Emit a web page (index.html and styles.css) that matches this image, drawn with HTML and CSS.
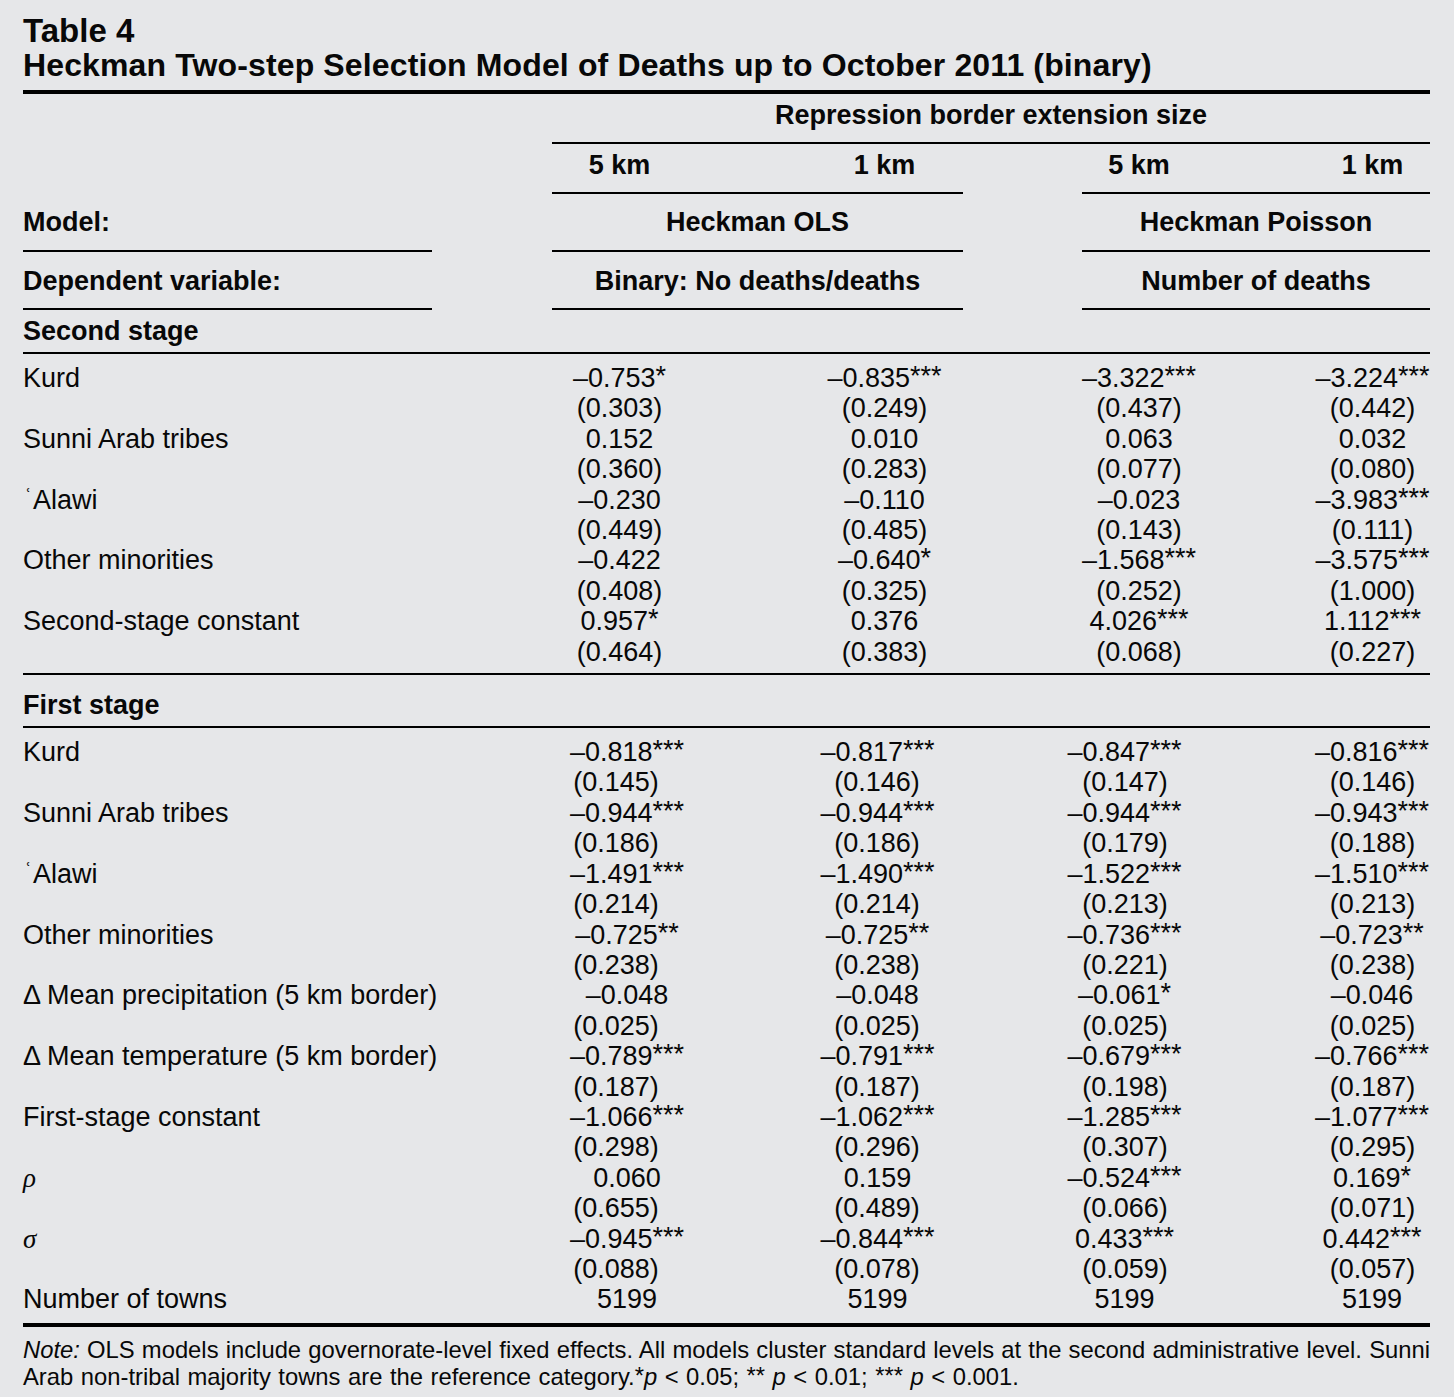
FILE: index.html
```html
<!DOCTYPE html>
<html lang="en">
<head>
<meta charset="utf-8">
<title>Table 4</title>
<link rel="stylesheet" href="styles.css">
</head>
<body>
<div class="page">
  <h1 class="title">
    <span class="t1">Table 4</span>
    <span class="t2">Heckman Two-step Selection Model of Deaths up to October 2011 (binary)</span>
  </h1>
  <table class="tbl">
    <colgroup>
      <col class="c-label"><col class="c-gap1"><col class="c-1"><col class="c-2"><col class="c-gap2a"><col class="c-gap2b"><col class="c-3"><col class="c-4">
    </colgroup>
    <thead>
      <tr class="h-rep"><td></td><td></td><th colspan="6" class="rule">Repression border extension size</th></tr>
      <tr class="h-km"><td></td><td></td><th class="rule k1">5 km</th><th class="rule k2">1 km</th><td colspan="2"></td><th class="rule k3">5 km</th><th class="rule k4">1 km</th></tr>
      <tr class="h-model"><th class="rule lbl">Model:</th><td></td><th colspan="2" class="rule">Heckman OLS</th><td colspan="2"></td><th colspan="2" class="rule">Heckman Poisson</th></tr>
      <tr class="h-dep"><th class="rule lbl">Dependent variable:</th><td></td><th colspan="2" class="rule">Binary: No deaths/deaths</th><td colspan="2"></td><th colspan="2" class="rule">Number of deaths</th></tr>
    </thead>
    <tbody class="stage s2">
      <tr class="sec"><th colspan="8">Second stage</th></tr>
      <tr class="v first"><td class="lbl">Kurd</td><td></td><td>–0.753<span class="st">*</span></td><td>–0.835<span class="st">***</span></td><td></td><td colspan="2">–3.322<span class="st">***</span></td><td>–3.224<span class="st">***</span></td></tr>
      <tr class="se"><td></td><td></td><td>(0.303)</td><td>(0.249)</td><td></td><td colspan="2">(0.437)</td><td>(0.442)</td></tr>
      <tr class="v"><td class="lbl">Sunni Arab tribes</td><td></td><td>0.152</td><td>0.010</td><td></td><td colspan="2">0.063</td><td>0.032</td></tr>
      <tr class="se"><td></td><td></td><td>(0.360)</td><td>(0.283)</td><td></td><td colspan="2">(0.077)</td><td>(0.080)</td></tr>
      <tr class="v"><td class="lbl"><span class="ayn">ʿ</span>Alawi</td><td></td><td>–0.230</td><td>–0.110</td><td></td><td colspan="2">–0.023</td><td>–3.983<span class="st">***</span></td></tr>
      <tr class="se"><td></td><td></td><td>(0.449)</td><td>(0.485)</td><td></td><td colspan="2">(0.143)</td><td>(0.111)</td></tr>
      <tr class="v"><td class="lbl">Other minorities</td><td></td><td>–0.422</td><td>–0.640<span class="st">*</span></td><td></td><td colspan="2">–1.568<span class="st">***</span></td><td>–3.575<span class="st">***</span></td></tr>
      <tr class="se"><td></td><td></td><td>(0.408)</td><td>(0.325)</td><td></td><td colspan="2">(0.252)</td><td>(1.000)</td></tr>
      <tr class="v"><td class="lbl">Second-stage constant</td><td></td><td>0.957<span class="st">*</span></td><td>0.376</td><td></td><td colspan="2">4.026<span class="st">***</span></td><td>1.112<span class="st">***</span></td></tr>
      <tr class="se last"><td></td><td></td><td>(0.464)</td><td>(0.383)</td><td></td><td colspan="2">(0.068)</td><td>(0.227)</td></tr>
    </tbody>
    <tbody class="stage s1">
      <tr class="sec"><th colspan="8">First stage</th></tr>
      <tr class="v first"><td class="lbl">Kurd</td><td></td><td>–0.818<span class="st">***</span></td><td>–0.817<span class="st">***</span></td><td></td><td colspan="2">–0.847<span class="st">***</span></td><td>–0.816<span class="st">***</span></td></tr>
      <tr class="se"><td></td><td></td><td>(0.145)</td><td>(0.146)</td><td></td><td colspan="2">(0.147)</td><td>(0.146)</td></tr>
      <tr class="v"><td class="lbl">Sunni Arab tribes</td><td></td><td>–0.944<span class="st">***</span></td><td>–0.944<span class="st">***</span></td><td></td><td colspan="2">–0.944<span class="st">***</span></td><td>–0.943<span class="st">***</span></td></tr>
      <tr class="se"><td></td><td></td><td>(0.186)</td><td>(0.186)</td><td></td><td colspan="2">(0.179)</td><td>(0.188)</td></tr>
      <tr class="v"><td class="lbl"><span class="ayn">ʿ</span>Alawi</td><td></td><td>–1.491<span class="st">***</span></td><td>–1.490<span class="st">***</span></td><td></td><td colspan="2">–1.522<span class="st">***</span></td><td>–1.510<span class="st">***</span></td></tr>
      <tr class="se"><td></td><td></td><td>(0.214)</td><td>(0.214)</td><td></td><td colspan="2">(0.213)</td><td>(0.213)</td></tr>
      <tr class="v"><td class="lbl">Other minorities</td><td></td><td>–0.725<span class="st">**</span></td><td>–0.725<span class="st">**</span></td><td></td><td colspan="2">–0.736<span class="st">***</span></td><td>–0.723<span class="st">**</span></td></tr>
      <tr class="se"><td></td><td></td><td>(0.238)</td><td>(0.238)</td><td></td><td colspan="2">(0.221)</td><td>(0.238)</td></tr>
      <tr class="v"><td class="lbl">Δ Mean precipitation (5 km border)</td><td></td><td>–0.048</td><td>–0.048</td><td></td><td colspan="2">–0.061<span class="st">*</span></td><td>–0.046</td></tr>
      <tr class="se"><td></td><td></td><td>(0.025)</td><td>(0.025)</td><td></td><td colspan="2">(0.025)</td><td>(0.025)</td></tr>
      <tr class="v"><td class="lbl">Δ Mean temperature (5 km border)</td><td></td><td>–0.789<span class="st">***</span></td><td>–0.791<span class="st">***</span></td><td></td><td colspan="2">–0.679<span class="st">***</span></td><td>–0.766<span class="st">***</span></td></tr>
      <tr class="se"><td></td><td></td><td>(0.187)</td><td>(0.187)</td><td></td><td colspan="2">(0.198)</td><td>(0.187)</td></tr>
      <tr class="v"><td class="lbl">First-stage constant</td><td></td><td>–1.066<span class="st">***</span></td><td>–1.062<span class="st">***</span></td><td></td><td colspan="2">–1.285<span class="st">***</span></td><td>–1.077<span class="st">***</span></td></tr>
      <tr class="se"><td></td><td></td><td>(0.298)</td><td>(0.296)</td><td></td><td colspan="2">(0.307)</td><td>(0.295)</td></tr>
      <tr class="v"><td class="lbl greek">ρ</td><td></td><td>0.060</td><td>0.159</td><td></td><td colspan="2">–0.524<span class="st">***</span></td><td>0.169<span class="st">*</span></td></tr>
      <tr class="se"><td></td><td></td><td>(0.655)</td><td>(0.489)</td><td></td><td colspan="2">(0.066)</td><td>(0.071)</td></tr>
      <tr class="v"><td class="lbl greek">σ</td><td></td><td>–0.945<span class="st">***</span></td><td>–0.844<span class="st">***</span></td><td></td><td colspan="2">0.433<span class="st">***</span></td><td>0.442<span class="st">***</span></td></tr>
      <tr class="se"><td></td><td></td><td>(0.088)</td><td>(0.078)</td><td></td><td colspan="2">(0.059)</td><td>(0.057)</td></tr>
      <tr class="v last"><td class="lbl">Number of towns</td><td></td><td>5199</td><td>5199</td><td></td><td colspan="2">5199</td><td>5199</td></tr>
    </tbody>
  </table>
  <p class="note">
    <span class="l1"><em>Note:</em> OLS models include governorate-level fixed effects. All models cluster standard levels at the second administrative level. Sunni</span>
    <span class="l2">Arab non-tribal majority towns are the reference category.<span class="nst">*</span><em>p</em> &lt; 0.05; <span class="nst">**</span> <em>p</em> &lt; 0.01; <span class="nst">***</span> <em>p</em> &lt; 0.001.</span>
  </p>
</div>
</body>
</html>
```

FILE: styles.css
```css
html, body {
  margin: 0;
  padding: 0;
  background: #e6e7e9;
}

body {
  font-family: "Liberation Sans", Arial, Helvetica, sans-serif;
  color: #080808;
}

.page {
  width: 1407px;
  padding: 0 24px 0 23px;
}

/* ---------- title ---------- */
.title {
  margin: 0;
  padding: 13px 0 7px;
  border-bottom: 4px solid #000;
  font-size: 32px;
  font-weight: bold;
  line-height: 35px;
}

.title .t1,
.title .t2 {
  display: block;
}

.title .t1 {
  font-size: 33px;
}

.title .t2 {
  letter-spacing: 0.13px;
}

/* ---------- table ---------- */
.tbl {
  width: 1407px;
  table-layout: fixed;
  border-collapse: separate;
  border-spacing: 0;
  font-size: 27px;
  line-height: 30.4px;
}

.c-label { width: 409px; }
.c-gap1  { width: 120px; }
.c-1     { width: 200px; }
.c-2     { width: 211px; }
.c-gap2a { width: 77px; }
.c-gap2b { width: 42px; }
.c-3     { width: 174px; }
.c-4     { width: 174px; }

.tbl th,
.tbl td {
  padding: 0;
  vertical-align: top;
  text-align: center;
  white-space: nowrap;
}

.tbl th {
  font-weight: bold;
}

.tbl thead,
.tbl .sec {
  line-height: 30px;
}

.tbl .lbl {
  text-align: left;
}

.tbl .rule {
  border-bottom: 2px solid #000;
}

/* header rows */
.tbl .h-rep > *   { padding-top: 6px;  padding-bottom: 12px; }
.tbl .h-km > *    { padding-top: 6px;  padding-bottom: 12px; }
.tbl .h-model > * { padding-top: 13px; padding-bottom: 13px; }
.tbl .h-dep > *   { padding-top: 14px; padding-bottom: 12px; }

.tbl .h-km .k1 { padding-right: 65px; }
.tbl .h-km .k2 { padding-left: 54px; }
.tbl .h-km .k3 { padding-right: 60px; }
.tbl .h-km .k4 { padding-left: 59px; }

/* section rows */
.tbl .sec th {
  text-align: left;
  border-bottom: 2px solid #000;
}

.tbl .s2 .sec th { padding: 6px 0 6px; }
.tbl .s1 .sec th { padding: 15px 0 6px; }

.tbl .first > * { padding-top: 9px; }

.tbl .s2 .last > * {
  padding-bottom: 6px;
  border-bottom: 2px solid #000;
}

.tbl .s1 .last > * {
  padding-bottom: 8px;
  border-bottom: 4px solid #000;
}

/* column centring: second stage (data col 3 spans 1040–1256) */
.tbl .s2 tr > :nth-child(3) { padding-right: 65px; }
.tbl .s2 tr > :nth-child(4) { padding-left: 54px; }
.tbl .s2 tr > :nth-child(6) { padding-right: 18px; }
.tbl .s2 tr > :nth-child(7) { padding-left: 59px; }

/* column centring: first stage */
.tbl .s1 .v > :nth-child(3) { padding-right: 50px; }
.tbl .s1 .v > :nth-child(4) { padding-left: 40px; }
.tbl .s1 .v > :nth-child(6) { padding-right: 47px; }
.tbl .s1 .v > :nth-child(7) { padding-left: 58px; }

.tbl .s1 .se > :nth-child(3) { padding-right: 72px; }
.tbl .s1 .se > :nth-child(4) { padding-left: 39px; }
.tbl .s1 .se > :nth-child(6) { padding-right: 46px; }
.tbl .s1 .se > :nth-child(7) { padding-left: 59px; }

/* significance stars */
.st {
  font-size: 1em;
  vertical-align: 0.06em;
  line-height: 0;
}

.ayn {
  display: inline-block;
  font-family: "DejaVu Sans", sans-serif;
  font-size: 16px;
  vertical-align: 0.55em;
  line-height: 0;
  margin-left: 3px;
  width: 7px;
}

.greek {
  font-family: "Liberation Serif", "Times New Roman", serif;
  font-style: italic;
}

/* ---------- note ---------- */
.note {
  margin: 0;
  padding-top: 9px;
  font-size: 23.8px;
  line-height: 27px;
}

.note .l1 {
  display: block;
  text-align: justify;
  text-align-last: justify;
  white-space: nowrap;
}

.note .l2 {
  display: block;
  word-spacing: 0.9px;
}

.nst {
  font-size: 1em;
  vertical-align: 0.06em;
  line-height: 0;
}
```
